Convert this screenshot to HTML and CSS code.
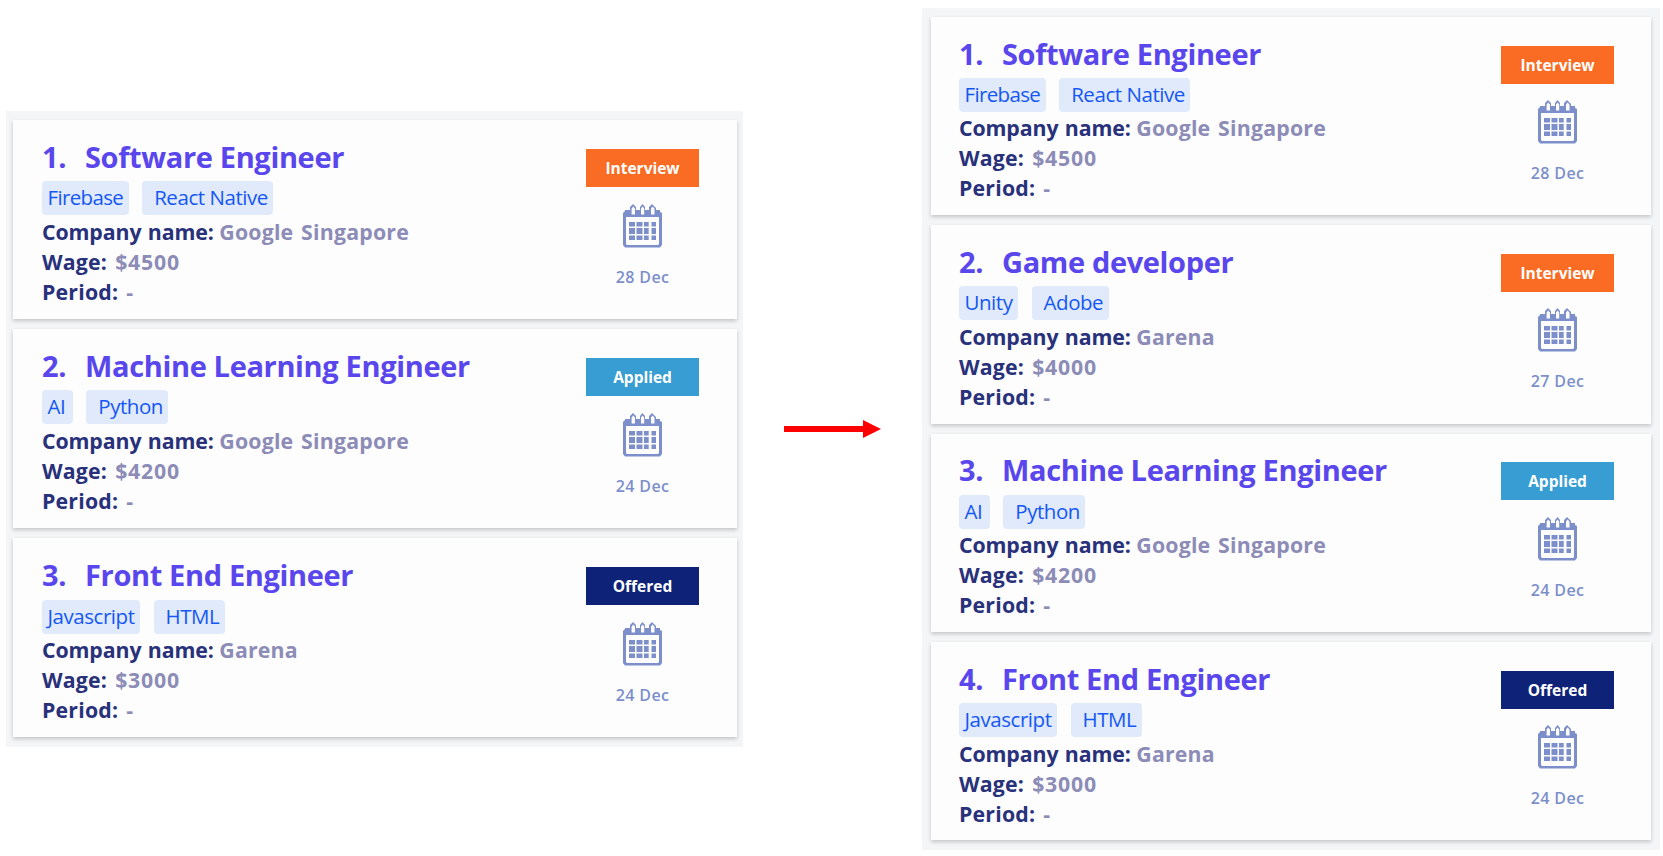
FILE: index.html
```
<!DOCTYPE html>
<html lang="en">
<head>
<meta charset="utf-8">
<title>Internship list</title>
<link rel="stylesheet" href="styles.css">
</head>
<body>
<svg class="defs" width="0" height="0">
  <symbol id="cal" viewBox="0 0 39 44">
    <path fill="#7c8fcb" fill-rule="evenodd" d="M2 6H7V3L10 0L13 3V6H17V3L19.500 0L22 3V6H26V3L29 0L33 4V6H37V8L39 9V41L37 43.500H2L0 41V9L2 7ZM3 13V40L4 41H35L36 40V13ZM8.600 4.500V10.500H12V4.500L10.300 2.500ZM18 4.500V10.500H21.200V4.500L19.600 2.500ZM28 4.500V10.500H31.500V4.500L29.500 2.500Z"/>
    <path fill="#7c8fcb" d="M6 18h6v4.500H6zM13.500 18h6v4.500h-6zM21 18h4.700v4.500H21zM28.500 18H33v4.500h-4.500zM6 24h6v6H6zM13.500 24h6v6h-6zM21 24h4.700v6H21zM28.500 24H33v6h-4.500zM6 31.500h6V36H6zM13.500 31.500h6V36h-6zM21 31.500h4.700V36H21zM28.500 31.500H33V36h-4.500z"/>
  </symbol>
</svg>
<main class="page">
  <section class="panel before">
    <article class="card">
      <div class="info">
        <h2 class="title"><span class="num">1.</span><span>Software Engineer</span></h2>
        <div class="tags"><span class="tag tight">Firebase</span><span class="tag next">React Native</span></div>
        <p class="field"><b>Company name:</b><span>Google Singapore</span></p>
        <p class="field wide"><b>Wage:</b><span>$4500</span></p>
        <p class="field wide"><b>Period:</b><span>-</span></p>
      </div>
      <div class="side"><span class="status interview">Interview</span><svg class="cal"><use href="#cal"/></svg><time>28 Dec</time></div>
    </article>
    <article class="card">
      <div class="info">
        <h2 class="title"><span class="num">2.</span><span>Machine Learning Engineer</span></h2>
        <div class="tags"><span class="tag short">AI</span><span class="tag next">Python</span></div>
        <p class="field"><b>Company name:</b><span>Google Singapore</span></p>
        <p class="field wide"><b>Wage:</b><span>$4200</span></p>
        <p class="field wide"><b>Period:</b><span>-</span></p>
      </div>
      <div class="side"><span class="status applied">Applied</span><svg class="cal"><use href="#cal"/></svg><time>24 Dec</time></div>
    </article>
    <article class="card">
      <div class="info">
        <h2 class="title"><span class="num">3.</span><span>Front End Engineer</span></h2>
        <div class="tags"><span class="tag">Javascript</span><span class="tag next">HTML</span></div>
        <p class="field"><b>Company name:</b><span>Garena</span></p>
        <p class="field wide"><b>Wage:</b><span>$3000</span></p>
        <p class="field wide"><b>Period:</b><span>-</span></p>
      </div>
      <div class="side"><span class="status offered">Offered</span><svg class="cal"><use href="#cal"/></svg><time>24 Dec</time></div>
    </article>
  </section>
  <svg class="arrow" viewBox="0 0 97 18"><path fill="#f00" d="M0 6H79V0L97 9L79 18V12H0Z"/></svg>
  <section class="panel after">
    <article class="card">
      <div class="info">
        <h2 class="title"><span class="num">1.</span><span>Software Engineer</span></h2>
        <div class="tags"><span class="tag tight">Firebase</span><span class="tag next">React Native</span></div>
        <p class="field"><b>Company name:</b><span>Google Singapore</span></p>
        <p class="field wide"><b>Wage:</b><span>$4500</span></p>
        <p class="field wide"><b>Period:</b><span>-</span></p>
      </div>
      <div class="side"><span class="status interview">Interview</span><svg class="cal"><use href="#cal"/></svg><time>28 Dec</time></div>
    </article>
    <article class="card">
      <div class="info">
        <h2 class="title"><span class="num">2.</span><span>Game developer</span></h2>
        <div class="tags"><span class="tag">Unity</span><span class="tag next">Adobe</span></div>
        <p class="field"><b>Company name:</b><span>Garena</span></p>
        <p class="field wide"><b>Wage:</b><span>$4000</span></p>
        <p class="field wide"><b>Period:</b><span>-</span></p>
      </div>
      <div class="side"><span class="status interview">Interview</span><svg class="cal"><use href="#cal"/></svg><time>27 Dec</time></div>
    </article>
    <article class="card">
      <div class="info">
        <h2 class="title"><span class="num">3.</span><span>Machine Learning Engineer</span></h2>
        <div class="tags"><span class="tag short">AI</span><span class="tag next">Python</span></div>
        <p class="field"><b>Company name:</b><span>Google Singapore</span></p>
        <p class="field wide"><b>Wage:</b><span>$4200</span></p>
        <p class="field wide"><b>Period:</b><span>-</span></p>
      </div>
      <div class="side"><span class="status applied">Applied</span><svg class="cal"><use href="#cal"/></svg><time>24 Dec</time></div>
    </article>
    <article class="card">
      <div class="info">
        <h2 class="title"><span class="num">4.</span><span>Front End Engineer</span></h2>
        <div class="tags"><span class="tag">Javascript</span><span class="tag next">HTML</span></div>
        <p class="field"><b>Company name:</b><span>Garena</span></p>
        <p class="field wide"><b>Wage:</b><span>$3000</span></p>
        <p class="field wide"><b>Period:</b><span>-</span></p>
      </div>
      <div class="side"><span class="status offered">Offered</span><svg class="cal"><use href="#cal"/></svg><time>24 Dec</time></div>
    </article>
  </section>
</main>
</body>
</html>
```
FILE: styles.css
```
* { box-sizing: border-box; }
body { margin: 0; background: #fff; font-family: "Open Sans", "Noto Sans", sans-serif; }
.defs { display: block; height: 0; }
.page { display: flex; align-items: flex-start; height: 856px; overflow: hidden; }
.panel { display: flex; flex-direction: column; gap: 10.400px; background: #f4f5f7; }
.before { margin: 111px 0 0 6px; width: 737px; height: 636px; padding: 9px 6px 0 7px; }
.after { margin: 8px 0 0 41px; width: 738px; height: 842px; padding: 9px 9px 0 9px; gap: 10.200px; }
.arrow { width: 97px; height: 18px; margin: 420px 0 0 41px; flex: none; }
.panel, .card { flex: none; }
.card { display: flex; justify-content: space-between; height: 198.800px; background: #fdfdfe; padding: 19px 38px 0 29px; box-shadow: 0 2px 4px rgba(0, 0, 0, .2); }
.after .card { height: 198.200px; padding: 18.500px 37px 0 28px; }
.title { display: flex; margin: 0; height: 42.300px; line-height: 36px; font-size: 29px; font-weight: 700; color: #5946ec; letter-spacing: -.35px; white-space: nowrap; }
.num { width: 43px; }
.tags { display: flex; gap: 13.500px; height: 34.700px; }
.tag { height: 34px; padding: 0 5.500px; line-height: 32px; font-size: 20.500px; color: #1557f5; background: #e0eafb; border-radius: 4px; letter-spacing: -.45px; }
.tight { letter-spacing: -.65px; }
.short { padding-right: 7.500px; }
.next { padding-left: 12px; }
.field { display: flex; gap: 5.500px; margin: 0; height: 30px; line-height: 31px; font-size: 21.300px; font-weight: 700; color: #8c8cb7; letter-spacing: 0; word-spacing: 2px; white-space: nowrap; }
.field span { letter-spacing: .2px; }
.field b { color: #28317a; font-weight: 700; letter-spacing: -.1px; word-spacing: 1px; }
.wide { gap: 8px; }
.field.wide b { letter-spacing: .2px; }
.wide span { letter-spacing: .8px; }
.field.wide span { letter-spacing: .8px; }
.side { display: flex; flex-direction: column; align-items: center; width: 113px; padding-top: 10px; }
.status { width: 113px; height: 38px; line-height: 38px; text-align: center; color: #fff; font-size: 15.500px; font-weight: 700; }
.interview { background: #fa6b23; }
.applied { background: #389dd2; }
.offered { background: #0e2277; }
.cal { width: 39px; height: 44px; margin-top: 16.500px; }
time { margin-top: 17px; line-height: 24px; font-size: 16px; font-weight: 600; color: #7c8fcb; letter-spacing: .4px; white-space: nowrap; }
```
